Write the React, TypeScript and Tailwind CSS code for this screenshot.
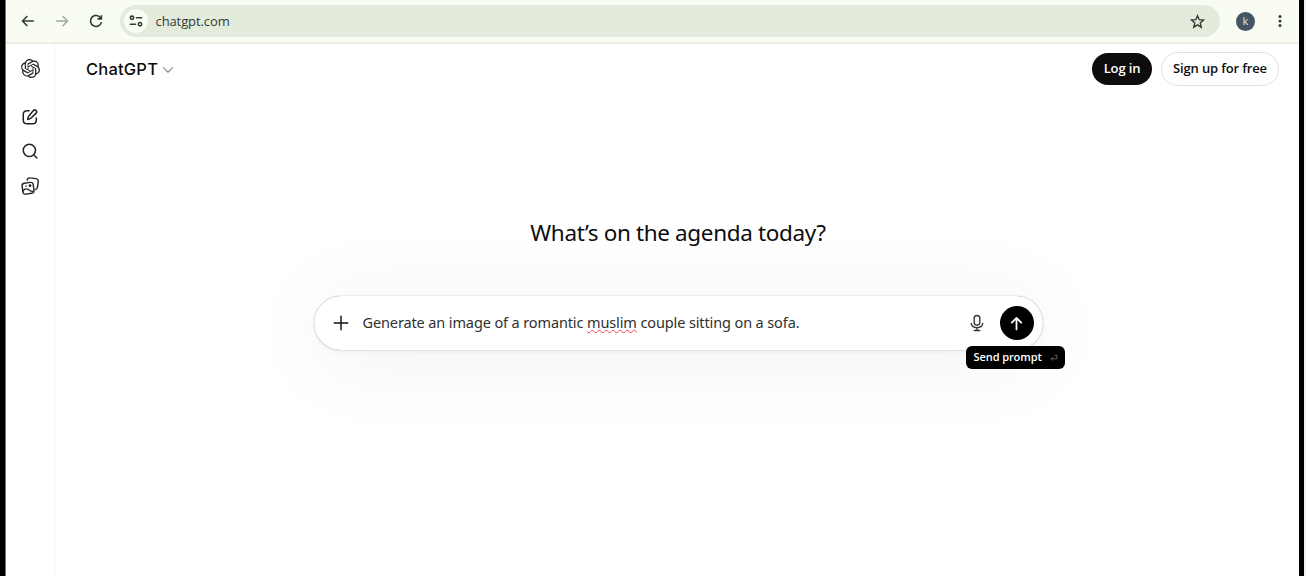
import type { ReactNode } from 'react'
import { SiOpenai } from 'react-icons/si'

function Icon({ size, width = 1.7, className, children }: { size: number; width?: number; className?: string; children: ReactNode }) {
  return (
    <svg
      width={size}
      height={size}
      viewBox="0 0 20 20"
      fill="none"
      stroke="currentColor"
      strokeWidth={width}
      strokeLinecap="round"
      strokeLinejoin="round"
      className={`shrink-0 ${className ?? ''}`}
    >
      {children}
    </svg>
  )
}

function BrowserBar() {
  return (
    <div className="flex h-[44px] shrink-0 items-center border-b-2 border-[#eaeee5] bg-[#f9fcf2] pl-[13px] text-[#2f3f2d]">
      <Icon size={18}>
        <path d="M16.5 10H4M9.3 4.5 3.8 10l5.5 5.5" strokeLinecap="butt" />
      </Icon>
      <Icon size={18} className="ml-4 text-[#a3a9a0]">
        <path d="M3.5 10H16M10.7 4.5l5.5 5.5-5.5 5.5" strokeLinecap="butt" />
      </Icon>
      <Icon size={18} width={1.8} className="ml-4">
        <path d="M15.3 6.8A6.1 6.1 0 1 0 16 11.3M16 3.5v4.2h-4.3" strokeLinecap="butt" />
      </Icon>
      <div className="ml-[15px] flex h-8 w-[1100px] items-center rounded-full bg-[#e3ebdc] pr-[14px] pl-1">
        <div className="flex size-6 items-center justify-center rounded-full bg-[#f9fcf2]">
          <Icon size={16} width={1.9} className="text-[#333b31]">
            <circle cx="5" cy="6" r="2.1" />
            <path d="M10.5 6H17M3 14h6.5" />
            <circle cx="15" cy="14" r="2.1" />
          </Icon>
        </div>
        <span className="mt-px ml-[7.5px] font-['Open_Sans','Noto_Sans',sans-serif] text-[13px] tracking-[-0.1px] text-[#343b32]">chatgpt.com</span>
        <Icon size={17} width={1.6} className="ml-auto text-[#30382e]">
          <path d="m10 3.2 2 4.7 5.1.4-3.9 3.4 1.2 5-4.4-2.7-4.4 2.7 1.2-5-3.9-3.4 5.1-.4z" strokeLinejoin="miter" />
        </Icon>
      </div>
      <div className="ml-4 flex size-[19px] items-center justify-center rounded-full bg-[#425664] font-['Open_Sans',sans-serif] text-[11px] text-[#dce4e8]">k</div>
      <svg width="6" height="16" viewBox="0 0 6 16" fill="#2f3f2d" className="ml-[22px]">
        <circle cx="3" cy="3.4" r="1.5" />
        <circle cx="3" cy="8" r="1.5" />
        <circle cx="3" cy="12.6" r="1.5" />
      </svg>
    </div>
  )
}

function Sidebar() {
  return (
    <div className="flex w-[49px] shrink-0 flex-col items-center border-r border-[#f4f4f4] pt-[15px] text-[#222]">
      <SiOpenai size={19} />
      <Icon size={18} width={1.7} className="mt-[30px]">
        <path d="M9 3H6.8C4 3 2.5 4.5 2.5 7.3v5.9c0 2.8 1.5 4.3 4.3 4.3h5.9c2.8 0 4.3-1.5 4.3-4.3V11" />
        <path d="M13.8 2.9a1.9 1.9 0 0 1 3 2.8l-5.5 5.5c-.8.8-2 1.3-3.9 1.5.1-1.9.6-3.1 1.4-3.9z" />
      </Icon>
      <Icon size={18} width={1.7} className="mt-4">
        <circle cx="9.3" cy="9.3" r="6.8" />
        <path d="m14.2 14.2 3.5 3.5" />
      </Icon>
      <Icon size={20} width={1.4} className="mt-4">
        <path d="M7.2 4.2c.3-1.8 1.300-2.600 3.200-2.300l5.400.7c1.900.3 2.700 1.300 2.400 3.200l-.7 5.400c-.2 1.500-.9 2.300-2.200 2.400" />
        <path d="m4.200 7.200 6.100-.8c1.700-.2 2.700.5 2.900 2.200l.8 5.800c.2 1.700-.5 2.700-2.200 2.900l-6 .8c-1.700.2-2.700-.5-2.900-2.200l-.8-5.800c-.2-1.700.5-2.700 2.100-2.900z" />
        <path d="M2.900 15c1.500-2.200 3.700-2.600 5.800-1.300 1.500 1.100 2.700 1.700 4.500 1.700" />
        <circle cx="10" cy="9.700" r=".7" fill="currentColor" />
        <circle cx="6" cy="10.200" r=".2" fill="currentColor" />
      </Icon>
    </div>
  )
}

function Header() {
  return (
    <div className="flex h-[49px] shrink-0 items-center pr-5 pl-[31px]">
      <span className="mt-[2px] font-['Inter',sans-serif] text-[16.5px] font-medium tracking-[0.2px] text-[#0d0d0d]">ChatGPT</span>
      <Icon size={14} width={1.7} className="mt-[2px] ml-[3px] text-[#8f8f8f]">
        <path d="m3.500 6.700 6.500 6.500 6.500-6.500" />
      </Icon>
      <div className="ml-auto flex items-center gap-[9px] font-['Open_Sans','Noto_Sans',sans-serif] text-[13px] font-semibold tracking-[-0.15px]">
        <button className="h-8 w-[60px] rounded-full bg-[#0d0d0d] text-white">Log in</button>
        <button className="h-[34px] w-[118px] rounded-full border border-[#e2e2e2] whitespace-nowrap text-[#0d0d0d]">Sign up for free</button>
      </div>
    </div>
  )
}

function Composer() {
  return (
    <div className="relative mt-[47px] flex h-[54px] w-[729px] items-center rounded-full bg-white pr-[9px] pl-[18px] shadow-[0_0_1px_rgba(0,0,0,0.55),0_3px_4px_rgba(0,0,0,0.04),0_8px_90px_rgba(0,0,0,0.065)]">
      <Icon size={18} width={1.6} className="text-[#111]">
        <path d="M10 2.5v15M2.5 10h15" />
      </Icon>
      <div className="ml-[13px] font-['Noto_Sans','Open_Sans',sans-serif] text-[14.5px] tracking-[-0.12px] whitespace-nowrap text-[#303030]">
        Generate an image of a romantic <span className="underline decoration-[#f04444] decoration-wavy decoration-[1.2px] underline-offset-1">muslim</span> couple sitting on a sofa.
      </div>
      <Icon size={18} width={1.5} className="ml-auto text-[#333]">
        <rect x="6.8" y="1.7" width="6.4" height="10.8" rx="3.2" />
        <path d="M3.5 10.5c.7 3 3.2 4.800 6.500 4.800s5.800-1.800 6.500-4.800M10 15.500v2.800M7 18.300h6" />
      </Icon>
      <button className="ml-[14px] flex size-[34px] items-center justify-center rounded-full bg-black text-white">
        <Icon size={17} width={2.1}>
          <path d="M10 17V3.5M4.5 9 10 3.5 15.5 9" />
        </Icon>
      </button>
      <div className="absolute top-[50px] -right-[22px] flex h-[23px] w-[99px] items-center rounded-md bg-black pl-[8px] font-['Open_Sans','Noto_Sans',sans-serif] text-[11px] font-semibold tracking-[-0.08px] whitespace-nowrap text-white">
        Send prompt
        <Icon size={8} width={2} className="ml-2 text-[#777]">
          <path d="M12 3h5v9H3M7 8l-4 4 4 4" />
        </Icon>
      </div>
    </div>
  )
}

export default function App() {
  return (
    <div className="flex h-[576px] w-[1306px] overflow-hidden bg-[#f0f0f0]">
      <div className="w-[5px] shrink-0 bg-black" />
      <div className="w-px shrink-0 bg-[#777]" />
      <div className="flex w-[1293px] shrink-0 flex-col bg-white">
        <BrowserBar />
        <div className="flex flex-1">
          <Sidebar />
          <div className="flex flex-1 flex-col">
            <Header />
            <div className="flex flex-col items-center pt-[123px] pl-[2px]">
              <h1 className="h-[33px] font-['Noto_Sans','Open_Sans',sans-serif] text-[22.5px] leading-[33px] tracking-[-0.36px] whitespace-nowrap text-[#0d0d0d]">What’s on the agenda today?</h1>
              <Composer />
            </div>
          </div>
        </div>
      </div>
      <div className="w-[5px] shrink-0 bg-black" />
    </div>
  )
}
